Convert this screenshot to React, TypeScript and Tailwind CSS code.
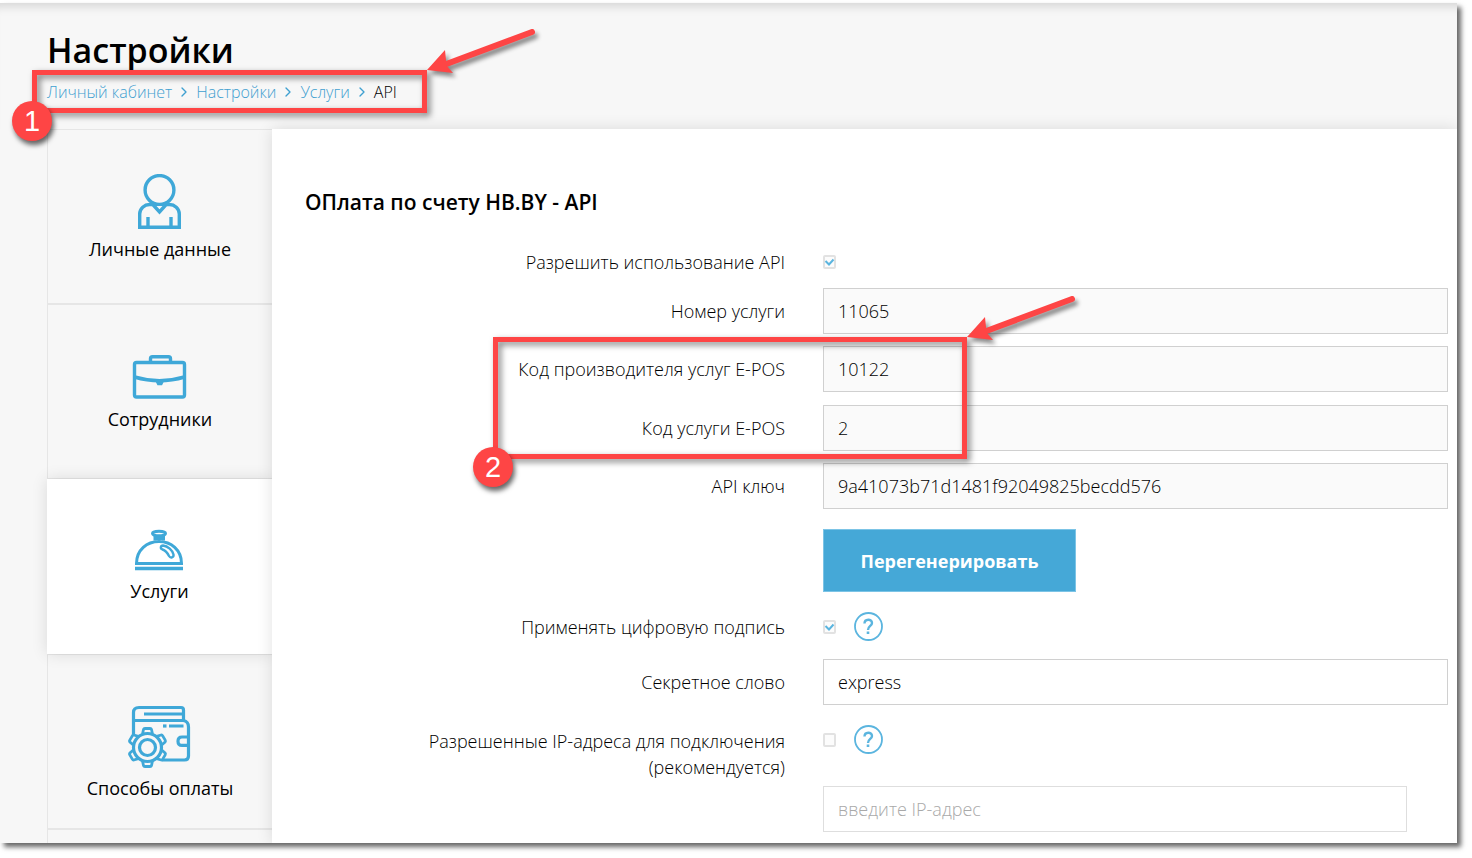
import React from "react";
import { ChevronRight } from "lucide-react";

const UserIcon = () => (
    <svg width="64" height="55" viewBox="0.5 0 64 55" fill="none" stroke="#3fa8d8" strokeWidth="3.400">
        <circle cx="32" cy="16" r="14.4" />
        <path d="M24.5 30.5H22c-5 0-9.800 4-9.800 9.500v13.300h39.600V40c0-5.500-4.800-9.500-9.800-9.500h-2.500" />
        <path d="M24 29l8 9 8-9M20.500 43v10M43.500 43v10" />
    </svg>
);

const CaseIcon = () => (
    <svg width="64" height="50" viewBox="0.5 0 64 50" fill="none" stroke="#3fa8d8" strokeWidth="3.400">
        <rect x="7" y="13.500" width="50" height="34.500" rx="2" />
        <path d="M23 13V9.700q0-2 2-2h16q2 0 2 2V13" />
        <path d="M7 28q25 7.500 50 0" />
        <path d="M30 32.500h4.500l-1 2h-2.500z" fill="#3fa8d8" />
    </svg>
);

const BellIcon = () => (
    <svg width="64" height="47" viewBox="1 0 64 47" fill="none" stroke="#3fa8d8" strokeWidth="3">
        <ellipse cx="32" cy="9.500" rx="6.500" ry="2.200" />
        <path d="M28 11.500v5M36.500 11.500v5M28 14.500h8" />
        <path d="M9.500 39.500C9.500 26 20 17.500 32 17.500s22.500 8.500 22.500 22z" />
        <path d="M8 44.500h48" strokeWidth="3.400" />
        <path
            d="M36 21.500c-2.500 0-3 3-.500 4 3 1 5 3.500 6.500 6.500 1.500 2.500 5 1.500 4.500-1.500-1-4-5.500-8.500-10.500-9z"
            strokeWidth="2.400"
        />
    </svg>
);

const WalletIcon = () => (
    <svg width="64" height="69" viewBox="1 0 64 69" fill="none" stroke="#3fa8d8" strokeWidth="3.200">
        <path d="M6.500 37V13.500q0-5 5.500-5h42q2.500 0 2.500 2.500v10" />
        <path d="M6.500 21.500h50q5 1 5 6.500V57q0 4-4 4H35" />
        <path d="M17 15h39M42 27h14.500" />
        <path d="M36 27h3.500" />
        <path d="M62 38h-7q-4 0-4 4.200t4 4.200h7" />
        <circle cx="20.500" cy="48.500" r="14" />
        <circle cx="20.500" cy="48.500" r="8" />
        {[0, 60, 120, 180, 240, 300].map((a) => (
            <path
                key={a}
                d="M15.500 35l1-4.500q.300-1 1.500-1h5q1.200 0 1.500 1l1 4.500"
                strokeWidth="2.800"
                transform={`rotate(${a} 20.500 48.500)`}
            />
        ))}
    </svg>
);

const menu = [
    { title: "Личные данные", icon: <UserIcon />, active: false },
    { title: "Сотрудники", icon: <CaseIcon />, active: false },
    { title: "Услуги", icon: <BellIcon />, active: true },
    { title: "Способы оплаты", icon: <WalletIcon />, active: false },
    { title: "", icon: null, active: false },
];

const crumbs = ["Личный кабинет", "Настройки", "Услуги"];

// Red frame with a number and an arrow, the parent sets the place
const Mark: React.FC<{ n: number; className: string }> = ({ n, className }) => (
    <div className={`pointer-events-none absolute z-20 ${className}`}>
        <div className="h-full w-full border-5 border-[#fe4545] drop-shadow-[3px_3px_3px_rgba(0,0,0,0.5)]" />
        <svg
            className="absolute bottom-full left-full -mb-1 drop-shadow-[3px_4px_2px_rgba(0,0,0,0.45)]"
            width="112"
            height="46"
            viewBox="0 0 112 46"
        >
            <path d="M14 38L105 4" stroke="#fe4545" strokeWidth="6" strokeLinecap="round" />
            <path d="M0 42L18 22l1 10 0 5 7 8z" fill="#fe4545" />
        </svg>
        <span className="absolute -bottom-[28px] -left-[20px] flex h-10 w-10 items-center justify-center rounded-full bg-[#fe4545] font-['Liberation_Sans',sans-serif] text-[29px] text-white shadow-[2px_4px_5px_rgba(0,0,0,0.6)]">
            {n}
        </span>
    </div>
);

const Field: React.FC<{ id: string; label: string; value: string; readOnly?: boolean }> = ({
    id,
    label,
    value,
    readOnly,
}) => (
    <div className="grid grid-cols-[480px_1fr] items-center gap-x-[38px]">
        <label htmlFor={id} className="text-right">
            {label}
        </label>
        <input
            id={id}
            type="text"
            defaultValue={value}
            readOnly={readOnly}
            className="h-[46px] w-full border border-[#d0d0d0] bg-white px-[14px] outline-none read-only:bg-[#fafafa]"
        />
    </div>
);

const Check: React.FC<{ id: string; checked?: boolean }> = ({ id, checked }) => (
    <span className="relative block h-[14px] w-[13px]">
        <input
            id={id}
            type="checkbox"
            defaultChecked={checked}
            className="peer block h-full w-full appearance-none rounded-[2px] border-2 border-[#e2e2e2] bg-[#fcfcfc]"
        />
        <svg
            className="pointer-events-none absolute inset-0 hidden peer-checked:block"
            width="13"
            height="14"
            viewBox="0 0 13 14"
            fill="none"
            stroke="#5bb5df"
            strokeWidth="2"
        >
            <path d="M2.500 6l3.500 3.500 4.500-5" />
        </svg>
    </span>
);

const Help = () => (
    <button type="button" aria-label="Помощь" className="block">
        <svg width="29" height="29" viewBox="0 0 29 29" fill="none" stroke="#5bb5df">
            <circle cx="14.500" cy="14.500" r="13.500" strokeWidth="1.800" />
            <path d="M10.500 11.500c0-5 7.500-5 7.500-.500 0 3-4 3-4 7" strokeWidth="2.400" />
            <path d="M14 19.500v2.500" strokeWidth="2.600" />
        </svg>
    </button>
);

const App: React.FC = () => {
    return (
        <div className="flex h-screen flex-col overflow-hidden bg-white pt-[3px] pr-[15px] pb-[15px] font-['Open_Sans',sans-serif] text-black">
            <div className="flex min-h-0 flex-1 flex-col overflow-hidden bg-[#f7f7f7] shadow-[4px_4px_5px_rgba(0,0,0,0.6)]">
                {/* Header */}
                <header className="h-[126px] shrink-0 pt-6 pl-[47px] shadow-[inset_0_12px_10px_-8px_rgba(0,0,0,0.13)]">
                    <h1 className="text-[34px] leading-[46px] font-semibold">Настройки</h1>
                    <nav className="relative mt-[7px] flex items-center text-base leading-6 font-light">
                        {crumbs.map((c) => (
                            <React.Fragment key={c}>
                                <a href="#" className="text-[#3fa0d0]">
                                    {c}
                                </a>
                                <ChevronRight size={16} className="mx-1 text-[#3fa0d0]" />
                            </React.Fragment>
                        ))}
                        <span>API</span>
                        <Mark n={1} className="-top-[10px] -left-[15px] h-[43px] w-[395px]" />
                    </nav>
                </header>

                <div className="flex min-h-0 flex-1 pl-[47px]">
                    {/* Sidebar */}
                    <aside className="w-[225px] shrink-0">
                        {menu.map((m) => (
                            <a
                                key={m.title}
                                href="#"
                                className={
                                    m.active
                                        ? "relative flex h-[175px] flex-col items-center bg-white pt-[45px] shadow-[0_0_15px_rgba(0,0,0,0.12)]"
                                        : "flex h-[175px] flex-col items-center border-y border-l border-[#e6e6e6] pt-11"
                                }
                            >
                                {m.icon}
                                <span className="mt-[7px] text-lg leading-[26px]">{m.title}</span>
                            </a>
                        ))}
                    </aside>

                    {/* Form */}
                    <main className="relative flex-1 bg-white pt-[60px] pr-[9px] pl-[33px] shadow-[0_0_15px_rgba(0,0,0,0.12)]">
                        <h2 className="text-[21px] leading-[26px] font-semibold">ОПлата по счету HB.BY - API</h2>
                        <form className="mt-[34px] text-lg leading-[26px] font-light">
                            <div className="grid grid-cols-[480px_1fr] items-center gap-x-[38px]">
                                <label htmlFor="api" className="text-right">
                                    Разрешить использование API
                                </label>
                                <Check id="api" checked />
                            </div>

                            <div className="mt-[13px] flex flex-col gap-3">
                                <Field id="service" label="Номер услуги" value="11065" readOnly />
                                <div className="relative flex flex-col gap-[13px]">
                                    <Field id="vendor" label="Код производителя услуг E-POS" value="10122" readOnly />
                                    <Field id="epos" label="Код услуги E-POS" value="2" readOnly />
                                    <Mark n={2} className="-top-[9px] -bottom-[8px] left-[188px] w-[474px]" />
                                </div>
                                <Field id="key" label="API ключ" value="9a41073b71d1481f92049825becdd576" readOnly />
                            </div>

                            <button
                                type="button"
                                className="mt-5 ml-[518px] block h-[63px] w-[253px] border border-[#7cc4e6] bg-[#45a8d7] font-bold text-white"
                            >
                                Перегенерировать
                            </button>

                            <div className="mt-5 grid grid-cols-[480px_1fr] items-center gap-x-[38px]">
                                <label htmlFor="sign" className="text-right">
                                    Применять цифровую подпись
                                </label>
                                <div className="flex items-center gap-[18px]">
                                    <Check id="sign" checked />
                                    <Help />
                                </div>
                            </div>
                            <div className="mt-[18px]">
                                <Field id="secret" label="Секретное слово" value="express" />
                            </div>
                            <div className="mt-5 grid grid-cols-[480px_1fr] gap-x-[38px]">
                                <label htmlFor="ip" className="pt-[3px] pl-20 text-right">
                                    Разрешенные IP-адреса для подключения (рекомендуется)
                                </label>
                                <div className="flex h-[29px] items-center gap-[18px]">
                                    <Check id="ip" />
                                    <Help />
                                </div>
                            </div>
                            <div className="mt-[6px] pr-[41px] pl-[518px]">
                                <input
                                    type="text"
                                    aria-label="IP-адрес"
                                    placeholder="введите IP-адрес"
                                    className="block h-[46px] w-full border border-[#dedede] bg-white px-[14px] outline-none placeholder:text-[#a9a9a9]"
                                />
                            </div>
                        </form>
                    </main>
                </div>
            </div>
        </div>
    );
};

export default App;
